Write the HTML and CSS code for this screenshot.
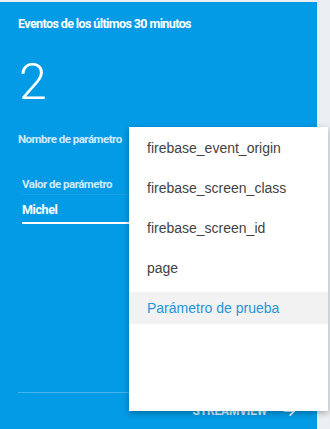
FILE: index.html
```html
<!DOCTYPE html>
<html lang="es">
<head>
    <meta charset="UTF-8">
    <meta name="viewport" content="width=device-width, initial-scale=1.0">
    <title>StreamView</title>
    <link rel="stylesheet" href="styles.css">
</head>
<body>

    <!-- Tarjeta de eventos -->
    <div class="card">
        <div class="card-title">Eventos de los últimos 30 minutos</div>
        <div class="card-count">2</div>

        <div class="field-label">Nombre de parámetro</div>

        <div class="value-field">
            <div class="value-label">Valor de parámetro</div>
            <div class="value-input">Michel</div>
        </div>

        <div class="card-footer">
            <span class="footer-link">STREAMVIEW</span>
            <svg class="footer-arrow" width="16" height="16" viewBox="0 0 24 24">
                <path d="M4 12h15M13 5l7 7-7 7" fill="none" stroke="#fff" stroke-width="2.4"/>
            </svg>
        </div>
    </div>

    <!-- Menú desplegable -->
    <div class="dropdown">
        <div class="dropdown-item">firebase_event_origin</div>
        <div class="dropdown-item">firebase_screen_class</div>
        <div class="dropdown-item">firebase_screen_id</div>
        <div class="dropdown-item">page</div>
        <div class="dropdown-item selected">Parámetro de prueba</div>
    </div>

</body>
</html>
```
FILE: styles.css
```css
/* Estilos generales */
* {
    margin: 0;
    padding: 0;
    box-sizing: border-box;
}

body {
    background-color: #eceff1;
    font-family: 'Roboto', sans-serif;
    width: 330px;
    height: 429px;
    overflow: hidden;
}

/* Tarjeta */
.card {
    margin-top: 2px;
    width: 317px;
    height: 427px;
    background-color: #039be5;
    color: white;
    padding: 13px 0 0 18px;
    display: flex;
    flex-direction: column;
}

.card-title {
    font-size: 12.5px;
    font-weight: 700;
    letter-spacing: -0.6px;
    line-height: 17px;
}

.card-count {
    font-size: 50px;
    font-weight: 300;
    line-height: 50px;
    margin-top: 25px;
    margin-left: 1px;
}

.field-label {
    margin-top: 25px;
    font-size: 11.5px;
    font-weight: 700;
    letter-spacing: -0.5px;
    color: rgba(255, 255, 255, 0.82);
    line-height: 14px;
}

.value-field {
    margin-top: 31px;
    margin-left: 4px;
    width: 200px;
}

.value-label {
    font-size: 11.5px;
    font-weight: 700;
    letter-spacing: -0.5px;
    color: rgba(255, 255, 255, 0.82);
    line-height: 14px;
    padding-bottom: 3px;
    border-bottom: 1px solid rgba(255, 255, 255, 0.08);
}

.value-input {
    font-size: 12.5px;
    font-weight: 700;
    letter-spacing: -0.4px;
    line-height: 16px;
    padding-top: 7px;
    padding-bottom: 4px;
    border-bottom: 2px solid white;
}

.card-footer {
    margin-top: auto;
    border-top: 1px solid rgba(255, 255, 255, 0.25);
    height: 37px;
    display: flex;
    align-items: center;
    justify-content: flex-end;
    padding-right: 20px;
    gap: 14px;
}

.footer-link {
    font-size: 12px;
    font-weight: 700;
    letter-spacing: -0.2px;
    color: rgba(255, 255, 255, 0.85);
}

/* Menú desplegable */
.dropdown {
    position: absolute;
    left: 129px;
    top: 127px;
    width: 199px;
    height: 284px;
    background: white;
    box-shadow: 0 2px 6px rgba(0, 0, 0, 0.3);
    padding-top: 5px;
    display: flex;
    flex-direction: column;
    gap: 8px;
}

.dropdown-item {
    height: 32px;
    line-height: 32px;
    padding-left: 18px;
    font-family: 'Liberation Sans', Arial, sans-serif;
    font-size: 14px;
    color: #424242;
}

.dropdown-item.selected {
    background-color: #f2f2f2;
    color: #1e96d8;
}
```
